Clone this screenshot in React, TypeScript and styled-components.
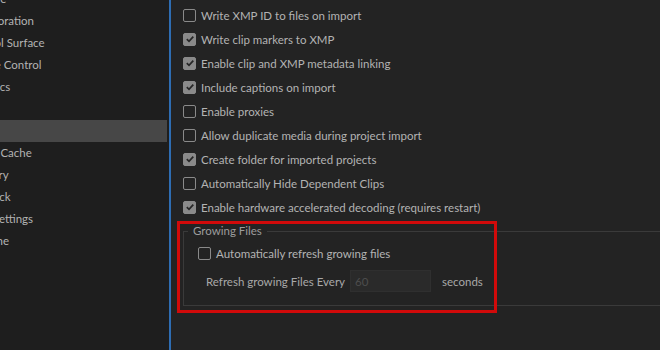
import React from "react";
import styled, { createGlobalStyle } from "styled-components";

const GlobalStyle = createGlobalStyle`
  html, body {
    margin: 0;
    padding: 0;
    background: #232323;
    overflow: hidden;
  }
  body {
    font-family: "Lato", "Noto Sans", sans-serif;
    font-size: 11.5px;
    color: #b3b3b3;
  }
`;

const Window = styled.div`
  display: flex;
  width: 660px;
  height: 350px;
  overflow: hidden;
`;

const Sidebar = styled.div`
  width: 169px;
  flex-shrink: 0;
  background: #1e1e1e;
  border-right: 2px solid #2e6db3;
  overflow: hidden;
`;

// list is scrolled: left part of the labels and the top entries are out of view
const NavList = styled.ul`
  list-style: none;
  margin: -12px 0 0 -34px;
  padding: 0;
  width: 201px;
`;

const NavItem = styled.li<{ $active?: boolean }>`
  height: 22px;
  line-height: 22px;
  white-space: nowrap;
  width: 201px;
  color: ${(p) => (p.$active ? "transparent" : "#b3b3b3")};
  background: ${(p) => (p.$active ? "#474747" : "transparent")};
`;

const Main = styled.div`
  flex: 1;
  padding: 3px 0 0 12px;
  display: flex;
  flex-direction: column;
`;

const Row = styled.label<{ $indent?: number }>`
  display: flex;
  align-items: center;
  gap: 5px;
  height: 24px;
  padding-left: ${(p) => p.$indent ?? 0}px;
  white-space: nowrap;
`;

const Box = styled.span<{ $checked: boolean }>`
  width: 13px;
  height: 13px;
  box-sizing: border-box;
  border-radius: 2px;
  flex-shrink: 0;
  border: 1.5px solid #8a8a8a;
  background: ${(p) => (p.$checked ? "#8a8a8a" : "transparent")};
  display: flex;
  align-items: center;
  justify-content: center;
`;

const Group = styled.fieldset`
  position: relative;
  margin: 5px 0 0 0;
  padding: 3px 0 8px 0;
  border: 1px solid #3a3a3a;
  border-right: none;
  min-width: 0;
  width: 100%;
`;

const Legend = styled.legend`
  margin-left: 4px;
  padding: 0 5px;
  line-height: 14px;
  color: #9c9c9c;
`;

const IntervalRow = styled.div`
  display: flex;
  align-items: center;
  height: 32px;
  padding-left: 22px;
  color: #a8a8a8;
  white-space: nowrap;
`;

const NumberField = styled.input`
  width: 81px;
  height: 22px;
  box-sizing: border-box;
  margin: 0 11px 0 5px;
  padding: 0 4px;
  background: #2a2a2a;
  border: 1px solid #2f2f2f;
  color: #4d4d4d;
  font: inherit;
  outline: none;
`;

// annotation frame drawn on top of the group
const Highlight = styled.div`
  position: absolute;
  left: -7px;
  top: -17px;
  width: 320px;
  height: 92px;
  box-sizing: border-box;
  border: 3px solid #d10a0a;
  pointer-events: none;
`;

const Check = ({ checked }: { checked: boolean }) => (
  <Box $checked={checked}>
    {checked && (
      <svg width="10" height="10" viewBox="0 0 10 10">
        <path d="M1.8 5.2 L4 7.3 L8.3 2.6" fill="none" stroke="#262626" strokeWidth="1.7" />
      </svg>
    )}
  </Box>
);

const navItems = [
  "Capture",
  "Collaboration",
  "Control Surface",
  "Device Control",
  "Graphics",
  "Labels",
  "Media",
  "Media Cache",
  "Memory",
  "Playback",
  "Sync Settings",
  "Timeline",
  "Trim",
];

const options = [
  { label: "Write XMP ID to files on import", checked: false },
  { label: "Write clip markers to XMP", checked: true },
  { label: "Enable clip and XMP metadata linking", checked: true },
  { label: "Include captions on import", checked: true },
  { label: "Enable proxies", checked: false },
  { label: "Allow duplicate media during project import", checked: false },
  { label: "Create folder for imported projects", checked: true },
  { label: "Automatically Hide Dependent Clips", checked: false },
  { label: "Enable hardware accelerated decoding (requires restart)", checked: true },
];

const App = () => {
  return (
    <Window>
      <GlobalStyle />
      <Sidebar>
        <NavList>
          {navItems.map((n) => (
            <NavItem key={n} $active={n === "Media"}>
              {n}
            </NavItem>
          ))}
        </NavList>
      </Sidebar>
      <Main>
        {options.map((o) => (
          <Row key={o.label}>
            <Check checked={o.checked} />
            {o.label}
          </Row>
        ))}
        <Group>
          <Legend>Growing Files</Legend>
          <Row $indent={14}>
            <Check checked={false} />
            Automatically refresh growing files
          </Row>
          <IntervalRow>
            Refresh growing Files Every
            <NumberField defaultValue="60" />
            seconds
          </IntervalRow>
          <Highlight />
        </Group>
      </Main>
    </Window>
  );
};

export default App;
